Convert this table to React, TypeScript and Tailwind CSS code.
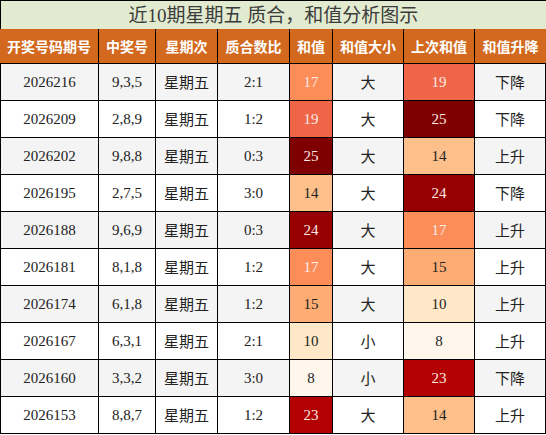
import React from "react";

type Row = { id: string; nums: string; ratio: string; sum: number; size: string; prev: number; trend: string };

const rows: Row[] = [
  { id: "2026216", nums: "9,3,5", ratio: "2:1", sum: 17, size: "大", prev: 19, trend: "下降" },
  { id: "2026209", nums: "2,8,9", ratio: "1:2", sum: 19, size: "大", prev: 25, trend: "下降" },
  { id: "2026202", nums: "9,8,8", ratio: "0:3", sum: 25, size: "大", prev: 14, trend: "上升" },
  { id: "2026195", nums: "2,7,5", ratio: "3:0", sum: 14, size: "大", prev: 24, trend: "下降" },
  { id: "2026188", nums: "9,6,9", ratio: "0:3", sum: 24, size: "大", prev: 17, trend: "上升" },
  { id: "2026181", nums: "8,1,8", ratio: "1:2", sum: 17, size: "大", prev: 15, trend: "上升" },
  { id: "2026174", nums: "6,1,8", ratio: "1:2", sum: 15, size: "大", prev: 10, trend: "上升" },
  { id: "2026167", nums: "6,3,1", ratio: "2:1", sum: 10, size: "小", prev: 8, trend: "上升" },
  { id: "2026160", nums: "3,3,2", ratio: "3:0", sum: 8, size: "小", prev: 23, trend: "下降" },
  { id: "2026153", nums: "8,8,7", ratio: "1:2", sum: 23, size: "大", prev: 14, trend: "上升" },
];

const heat: Record<number, string> = {
  8: "bg-[#fff7ec] text-[#222]",
  10: "bg-[#fee8c8] text-[#222]",
  14: "bg-[#fdc08a] text-[#222]",
  15: "bg-[#fdad74] text-[#222]",
  17: "bg-[#fc8d59] text-[#fbe9e2]",
  19: "bg-[#ef6548] text-[#fbe9e2]",
  23: "bg-[#b30000] text-[#fbe9e2]",
  24: "bg-[#960000] text-[#fbe9e2]",
  25: "bg-[#7f0000] text-[#fbe9e2]",
};

const grid = "grid grid-cols-[99px_57px_62px_72px_43px_71px_71px_71px]";
const serif = "font-['Liberation_Serif','Noto_Sans_CJK_SC',serif]";
const sans = "font-['Noto_Sans_CJK_SC','Noto_Sans',sans-serif]";

export default function App() {
  const headers = ["开奖号码期号", "中奖号", "星期次", "质合数比", "和值", "和值大小", "上次和值", "和值升降"];
  return (
    <div className="w-[546px] bg-white">
      <div
        className={`h-[29px] border-t border-l border-black bg-[#e2ebd0] flex items-center justify-center text-[19px] leading-none text-[#3c3c3c] ${serif}`}
      >
        近10期星期五 质合，和值分析图示
      </div>
      <div className={`${grid} bg-[#d2691e] border-b border-black`}>
        {headers.map((h, i) => (
          <div
            key={h}
            className={`h-[34px] flex items-center justify-center text-white text-[14px] font-bold ${sans} ${
              i < headers.length - 1 ? "border-r border-black" : ""
            }`}
          >
            {h}
          </div>
        ))}
      </div>
      {rows.map((r, idx) => {
        const bg = idx % 2 === 0 ? "bg-[#f4f4f4]" : "bg-white";
        const cell = "h-[37px] flex items-center justify-center border-r border-b border-black";
        return (
          <div key={r.id} className={`${grid} ${bg} text-[#222]`}>
            <div className={`${cell} border-l ${serif} text-[15px]`}>{r.id}</div>
            <div className={`${cell} ${serif} text-[15px]`}>{r.nums}</div>
            <div className={`${cell} ${sans} text-[15px]`}>星期五</div>
            <div className={`${cell} ${serif} text-[15px]`}>{r.ratio}</div>
            <div className={`${cell} ${serif} text-[15px] ${heat[r.sum]}`}>{r.sum}</div>
            <div className={`${cell} ${sans} text-[15px]`}>{r.size}</div>
            <div className={`${cell} ${serif} text-[15px] ${heat[r.prev]}`}>{r.prev}</div>
            <div className={`${cell} ${sans} text-[15px]`}>{r.trend}</div>
          </div>
        );
      })}
    </div>
  );
}
